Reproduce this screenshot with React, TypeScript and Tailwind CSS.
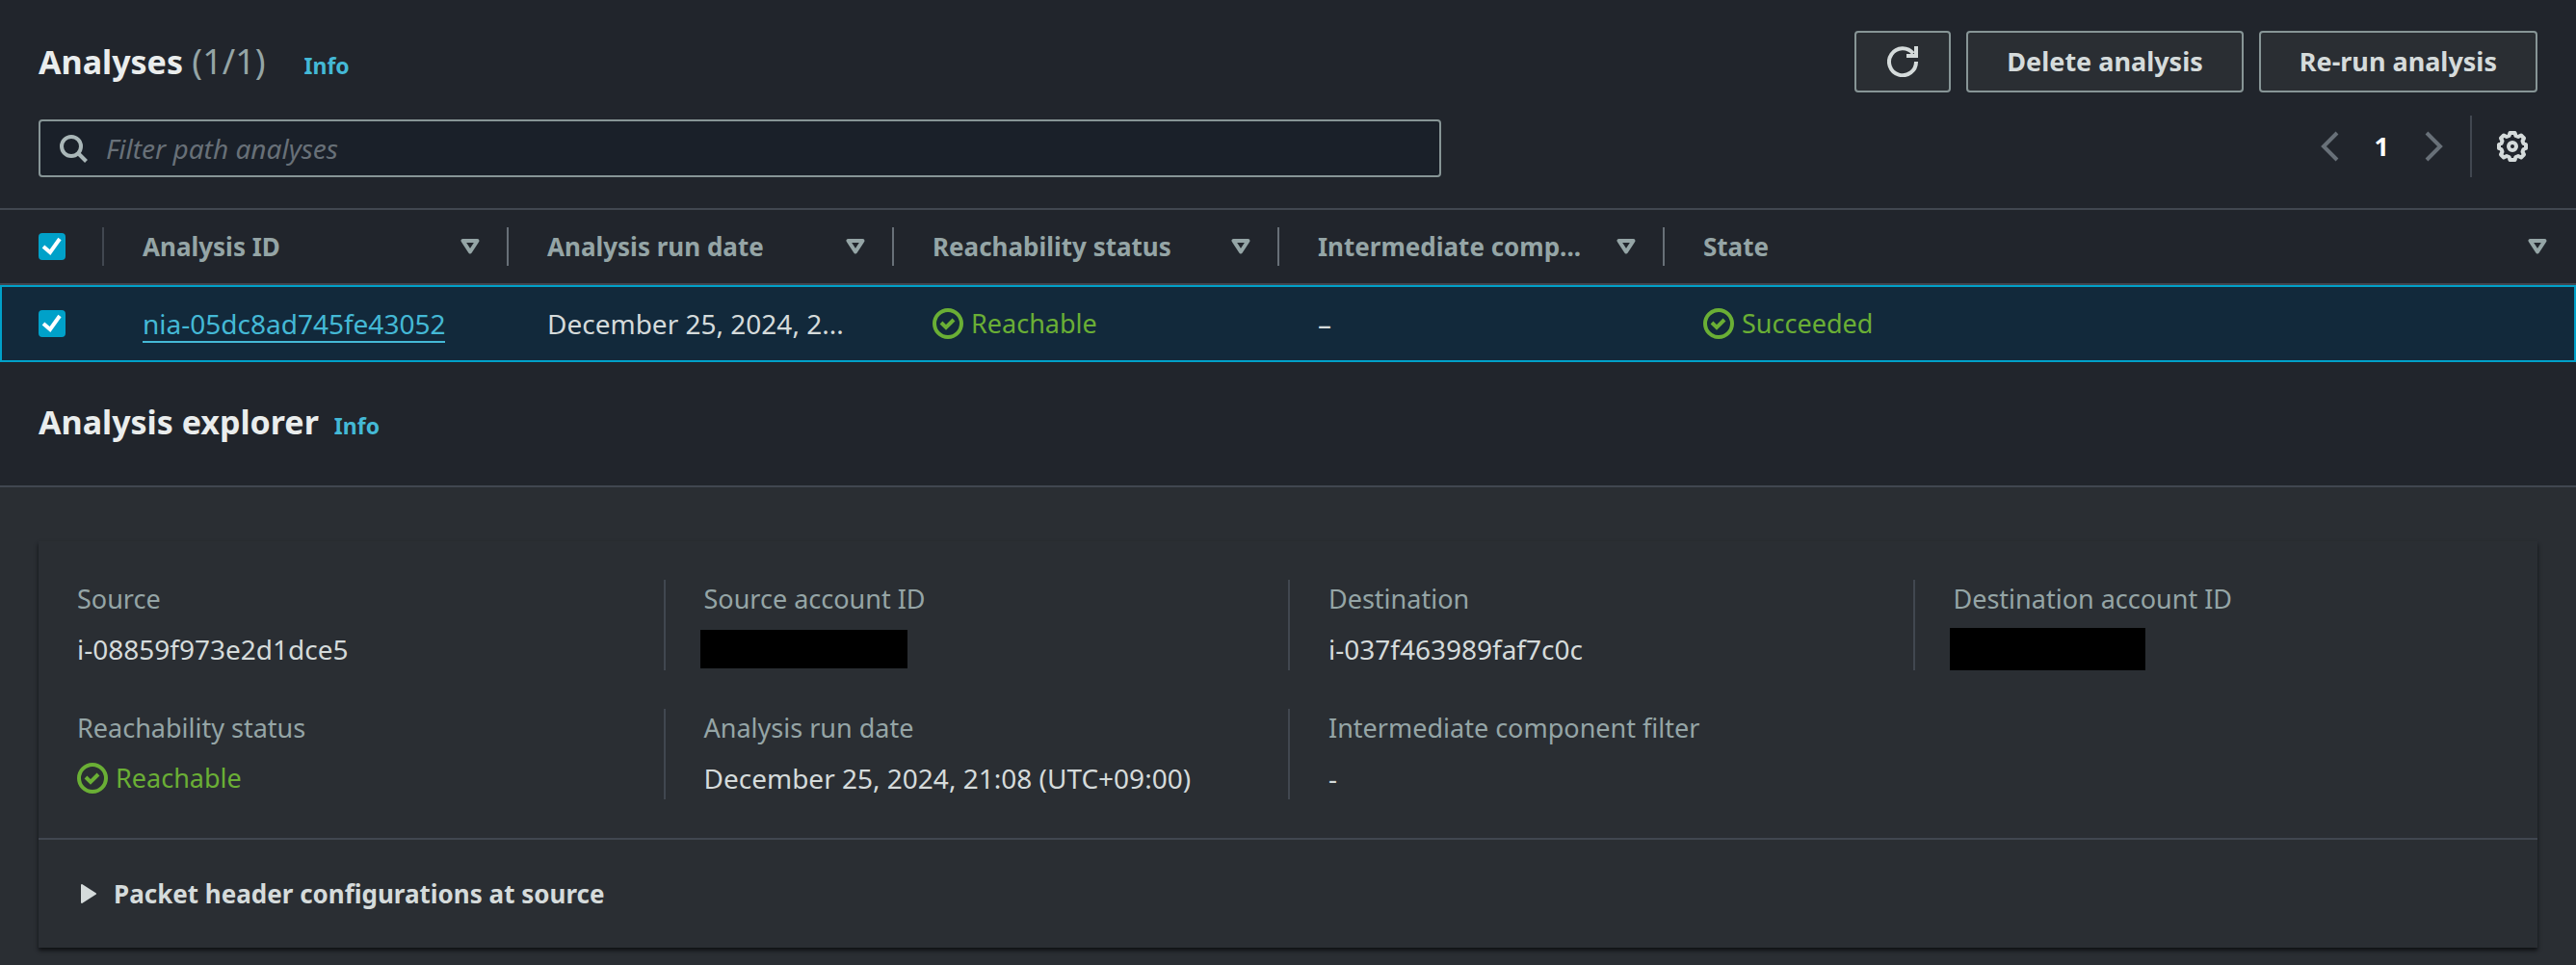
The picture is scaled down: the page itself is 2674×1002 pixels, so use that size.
import type { ReactNode } from "react";

const FOCUS = "focus-visible:outline-2 focus-visible:outline-[#44b9d6]";

function CheckBox({ label }: { label: string }) {
  return (
    <label className="relative block size-7">
      <input
        type="checkbox"
        defaultChecked
        aria-label={label}
        className="peer block size-7 appearance-none rounded-[4px] border-2 border-[#879596] checked:border-[#00a1c9] checked:bg-[#00a1c9]"
      />
      <svg viewBox="0 0 28 28" className="pointer-events-none absolute inset-0 hidden size-7 peer-checked:block" fill="none" stroke="#fff" strokeWidth="4">
        <path d="M5 14l7 6L22 6" />
      </svg>
    </label>
  );
}

function SortIcon() {
  return (
    <svg viewBox="0 0 20 16" className="h-4 w-5 shrink-0" fill="none" stroke="#95a5a6" strokeWidth="4" strokeLinejoin="round">
      <path d="M2.500 2h15L10 13.500z" />
    </svg>
  );
}

function Status({ children }: { children: ReactNode }) {
  return (
    <span className="flex items-center gap-2 text-[27px] text-[#6aaf35]">
      <svg viewBox="0 0 32 32" className="size-8 shrink-0" fill="none" stroke="currentColor" strokeWidth="4">
        <circle cx="16" cy="16" r="14" />
        <path d="M9 15l5 5 8-8" />
      </svg>
      {children}
    </span>
  );
}

function ActionButton({ children, label }: { children: ReactNode; label?: string }) {
  return (
    <button
      type="button"
      aria-label={label}
      className={`flex h-16 items-center rounded-[4px] border-2 border-[#879596] bg-[#2a2e33] text-[27px] font-bold text-[#d5dbdb] ${label ? "px-8" : "px-10"} ${FOCUS}`}
    >
      {children}
    </button>
  );
}

function Heading({ title, count }: { title: string; count?: string }) {
  return (
    <div className="flex items-baseline gap-4">
      <h2 className="text-[34px] leading-[44px] font-bold text-[#eaeded]">
        {title}
        {count && <span className="text-[36px] font-normal text-[#95a5a6]"> {count}</span>}
      </h2>
      <a href="#info" className={`text-[23px] leading-8 font-bold text-[#44b9d6] ${count ? "ml-6" : ""}`}>
        Info
      </a>
    </div>
  );
}

const columns = [
  { name: "Analysis ID", width: "w-[420px]" },
  { name: "Analysis run date", width: "w-[400px]" },
  { name: "Reachability status", width: "w-[400px]" },
  { name: "Intermediate comp...", title: "Intermediate component filter", width: "w-[400px]" },
  { name: "State", width: "" },
];

const details: { label: string; value: ReactNode }[] = [
  { label: "Source", value: "i-08859f973e2d1dce5" },
  { label: "Source account ID", value: <span className="-ml-1 block h-10 w-[215px] bg-black" /> },
  { label: "Destination", value: "i-037f463989faf7c0c" },
  { label: "Destination account ID", value: <span className="-ml-1 block h-11 w-[203px] bg-black" /> },
  { label: "Reachability status", value: <Status>Reachable</Status> },
  { label: "Analysis run date", value: "December 25, 2024, 21:08 (UTC+09:00)" },
  { label: "Intermediate component filter", value: "-" },
];

export default function App() {
  return (
    <div className="min-h-screen bg-[#2a2e33] font-['Noto_Sans','Open_Sans',sans-serif] text-[28px] leading-[44px] text-[#d5dbdb]">
      <section className="bg-[#21252c]">
        <div className="flex items-center justify-between px-10 pt-8">
          <Heading title="Analyses" count="(1/1)" />
          <div className="flex gap-4">
            <ActionButton label="Refresh">
              <svg viewBox="0 0 32 32" className="size-8" fill="none" stroke="currentColor" strokeWidth="4">
                <path d="M30 16a14 14 0 1 1-3-8.500" />
                <path d="M30 0v10H20" />
              </svg>
            </ActionButton>
            <ActionButton>Delete analysis</ActionButton>
            <ActionButton>Re-run analysis</ActionButton>
          </div>
        </div>

        <div className="flex items-start justify-between px-10 pt-6 pb-8">
          <label className="mt-1 flex h-15 w-[1456px] items-center gap-4 rounded-[4px] border-2 border-[#879596] bg-[#1a2029] px-5">
            <svg viewBox="0 0 32 32" className="size-8 shrink-0" fill="none" stroke="#aab7b8" strokeWidth="4">
              <circle cx="12" cy="14" r="10" />
              <path d="M19 21l8.500 8.500" />
            </svg>
            <input
              type="search"
              aria-label="Filter path analyses"
              placeholder="Filter path analyses"
              className="min-w-0 flex-1 bg-transparent outline-none placeholder:text-[#687078] placeholder:italic"
            />
          </label>
          <div className="flex h-16 items-center">
            <nav aria-label="Pagination" className="flex items-center">
              <button type="button" aria-label="Previous page" className="mr-9">
                <svg viewBox="0 0 20 32" className="h-8 w-5" fill="none" stroke="#687078" strokeWidth="4">
                  <path d="M17 2L3 16l14 14" />
                </svg>
              </button>
              <button type="button" aria-current="page" className="text-[27px] font-bold text-white">
                1
              </button>
              <button type="button" aria-label="Next page" className="ml-9">
                <svg viewBox="0 0 20 32" className="h-8 w-5" fill="none" stroke="#687078" strokeWidth="4">
                  <path d="M3 2l14 14L3 30" />
                </svg>
              </button>
            </nav>
            <div className="ml-7 flex h-16 items-center border-l-2 border-[#414750] pr-2.5 pl-6.5">
              <button type="button" aria-label="Preferences">
                <svg viewBox="0 0 32 32" className="size-8" fill="none" stroke="#d5dbdb" strokeWidth="4" strokeLinejoin="round">
                  <path d="M13.500 2h5l1 3 2.500 1 3-1.500 3 3L26.500 10.500l1 2.500 2.500 1v4l-2.500 1-1 2.500 1.500 3-3 3-3-1.500-2.500 1-1 3h-5l-1-3-2.500-1-3 1.500-3-3 1.500-3-1-2.500L2 18v-4l2.500-1 1-2.500L4 7.500l3-3L10 6l2.500-1z" />
                  <circle cx="16" cy="16" r="4" />
                </svg>
              </button>
            </div>
          </div>
        </div>

        <table className="w-full table-fixed border-separate border-spacing-0 text-left">
          <thead>
            <tr>
              <th scope="col" className="h-20 w-[108px] border-y-2 border-[#414750] p-0">
                <div className="flex h-10 items-center border-r-2 border-[#414750] pl-10">
                  <CheckBox label="Select all analyses" />
                </div>
              </th>
              {columns.map((c) => (
                <th key={c.name} scope="col" title={c.title} className={`h-20 border-y-2 border-[#414750] p-0 text-[26px] font-bold text-[#95a5a6] ${c.width}`}>
                  <div className={`flex h-10 items-center justify-between pl-10 ${c.width ? "border-r-2 border-[#687078] pr-7" : "pr-7.5"}`}>
                    <span className="whitespace-nowrap">{c.name}</span>
                    <SortIcon />
                  </div>
                </th>
              ))}
            </tr>
          </thead>
          <tbody>
            <tr className="h-20 bg-[#12293b] outline-2 -outline-offset-2 outline-[#00a1c9]">
              <td className="p-0 pl-10">
                <CheckBox label="Select nia-05dc8ad745fe43052" />
              </td>
              <td className="p-0 pl-10">
                <a href="#analysis" className="inline-block border-b-2 border-[#44b9d6] leading-9 text-[#44b9d6]">
                  nia-05dc8ad745fe43052
                </a>
              </td>
              <td title="December 25, 2024, 21:08 (UTC+09:00)" className="p-0 pl-10 whitespace-nowrap">
                December 25, 2024, 2...
              </td>
              <td className="p-0 pl-10">
                <Status>Reachable</Status>
              </td>
              <td className="p-0 pl-10">–</td>
              <td className="p-0 pl-10">
                <Status>Succeeded</Status>
              </td>
            </tr>
          </tbody>
        </table>

        <div className="border-b-2 border-[#414750] px-10 pt-10 pb-11">
          <Heading title="Analysis explorer" />
        </div>
      </section>

      <section className="px-10 pt-14 pb-4">
        <div className="bg-[#2a2e33] shadow-[0_3px_4px_0_#0f1114]">
          <dl className="grid grid-cols-4 gap-y-10 py-10">
            {details.map((d, i) => (
              <div key={d.label} className={`flex h-[94px] flex-col gap-2.5 pl-10 ${i % 4 ? "border-l-2 border-[#414750]" : ""}`}>
                <dt className="text-[27px] leading-10 text-[#95a5a6]">{d.label}</dt>
                <dd className="flex h-11 items-center">{d.value}</dd>
              </div>
            ))}
          </dl>
          <button
            type="button"
            aria-expanded="false"
            className={`flex h-[114px] w-full items-center gap-4.5 border-t-2 border-[#414750] pl-11 text-left text-[26px] font-bold ${FOCUS}`}
          >
            <svg viewBox="0 0 16 20" className="h-5 w-4" fill="#d5dbdb" stroke="#d5dbdb" strokeWidth="2" strokeLinejoin="round">
              <path d="M1 1l14 9-14 9z" />
            </svg>
            Packet header configurations at source
          </button>
        </div>
      </section>
    </div>
  );
}
